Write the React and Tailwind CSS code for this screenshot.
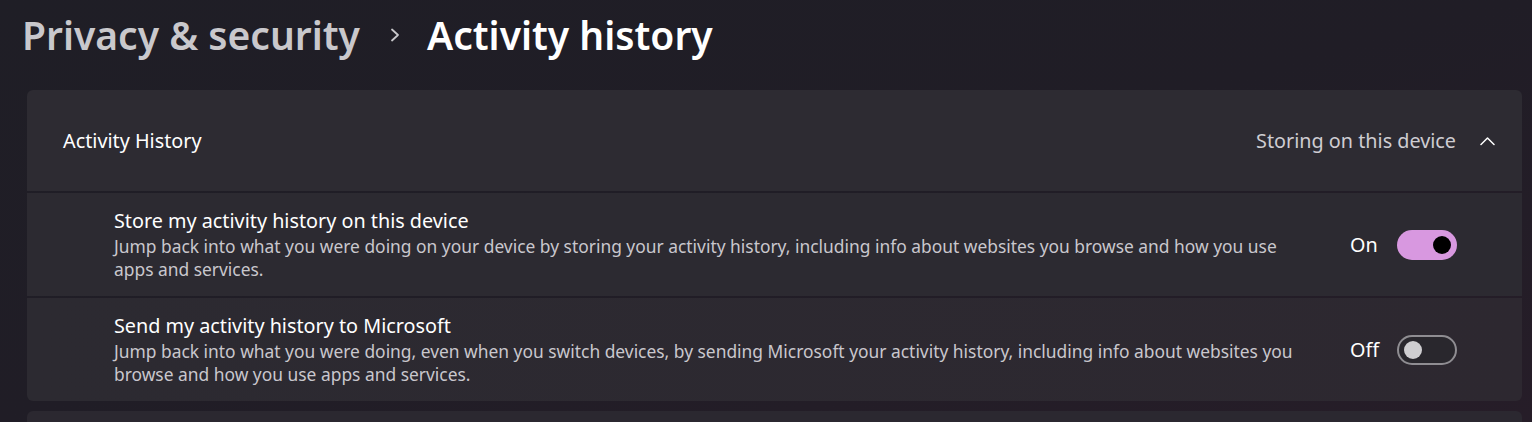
import React from "react";

function Toggle({ on }) {
  if (on) {
    return (
      <div className="flex h-[30px] w-[60px] items-center justify-end rounded-full bg-[#d898e0] pr-[6px]">
        <div className="h-[18px] w-[18px] rounded-full bg-black" />
      </div>
    );
  }
  return (
    <div className="flex h-[30px] w-[60px] items-center justify-start rounded-full border-2 border-[#8f8d92] bg-[#29272d] pl-[5px]">
      <div className="h-[18px] w-[18px] rounded-full bg-[#cfced1]" />
    </div>
  );
}

function Row({ title, desc, on, last }) {
  return (
    <div
      className={`flex h-[103px] items-center bg-[#2c2a31] pl-[87px] pr-[65px] ${
        last ? "rounded-b-[6px] bg-gradient-to-r from-[#2c2a31] to-[#2d2830]" : ""
      }`}
    >
      <div className="mr-[40px] flex min-w-0 flex-1 flex-col">
        <div className="text-[19.8px] leading-[25px] text-white">{title}</div>
        <div className="mt-[2px] text-[17.4px] leading-[23px] text-[#c9c7cd]">{desc}</div>
      </div>
      <div className="w-[47px] text-[19.8px] leading-[25px] text-white">{on ? "On" : "Off"}</div>
      <Toggle on={on} />
    </div>
  );
}

export default function App() {
  return (
    <div
      className="h-[422px] w-full overflow-hidden bg-gradient-to-br from-[#1f1e26] via-[#201d26] to-[#261d28]"
      style={{ fontFamily: '"Noto Sans", "Open Sans", sans-serif' }}
    >
      <div className="flex h-[70px] items-center pl-[22px]">
        <span className="text-[39px] font-semibold leading-[52px] text-[#c9c8cc]">Privacy &amp; security</span>
        <svg className="ml-[30px] mr-[27px] h-[16px] w-[10px]" viewBox="0 0 10 16" fill="none">
          <path d="M2 2.5 L8 8 L2 13.5" stroke="#c9c8cc" strokeWidth="1.8" strokeLinecap="round" strokeLinejoin="round" />
        </svg>
        <span className="text-[39px] font-semibold leading-[52px] text-white">Activity history</span>
      </div>
      <div className="mt-[20px] pl-[27px] pr-[10px]">
        <div className="flex flex-col gap-[2px]">
          <div className="flex h-[101px] items-center rounded-t-[6px] bg-[#2d2b32] pl-[36px] pr-[27px]">
            <div className="flex-1 text-[19.8px] leading-[25px] text-white">Activity History</div>
            <div className="text-[19.8px] leading-[25px] text-[#cfcdd2]">Storing on this device</div>
            <svg className="ml-[24px] h-[10px] w-[15px]" viewBox="0 0 15 10" fill="none">
              <path d="M1 8.5 L7.5 2 L14 8.5" stroke="#ffffff" strokeWidth="1.5" strokeLinecap="round" strokeLinejoin="round" />
            </svg>
          </div>
          <Row
            title="Store my activity history on this device"
            desc="Jump back into what you were doing on your device by storing your activity history, including info about websites you browse and how you use apps and services."
            on
          />
          <Row
            title="Send my activity history to Microsoft"
            desc="Jump back into what you were doing, even when you switch devices, by sending Microsoft your activity history, including info about websites you browse and how you use apps and services."
            on={false}
            last
          />
        </div>
        <div className="mt-[10px] h-[40px] rounded-t-[6px] bg-[#2b2830]" />
      </div>
    </div>
  );
}
